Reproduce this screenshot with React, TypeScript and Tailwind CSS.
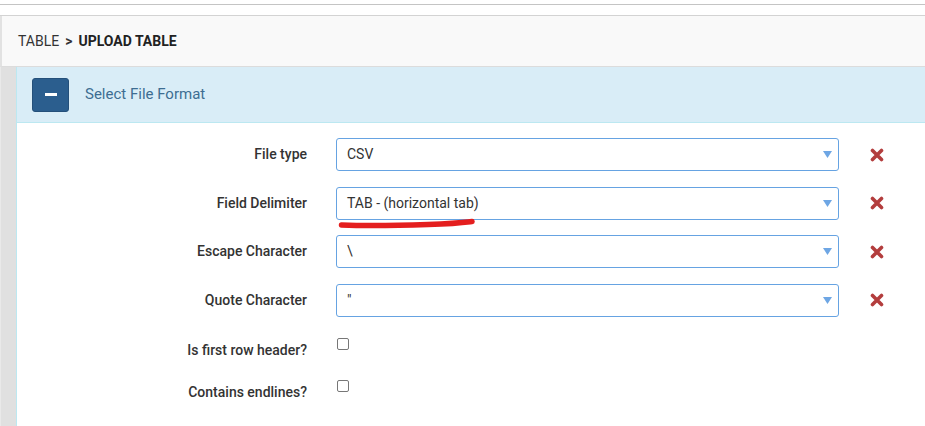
import React from "react";

const rows = [
  { label: "File type", value: "CSV" },
  { label: "Field Delimiter", value: "TAB - (horizontal tab)" },
  { label: "Escape Character", value: "\\" },
  { label: "Quote Character", value: '"' },
];

function Caret() {
  return (
    <svg width="9" height="7" viewBox="0 0 9 7" className="shrink-0">
      <path d="M0 0h9L4.5 7z" fill="#6ea6e4" />
    </svg>
  );
}

function RemoveIcon() {
  return (
    <svg width="14" height="14" viewBox="0 0 14 14">
      <path d="M2.5 2.5L11.5 11.5M11.5 2.5L2.5 11.5" stroke="#b33d3d" strokeWidth="3.6" strokeLinecap="round" />
    </svg>
  );
}

export default function App() {
  return (
    <div className="w-[925px] h-[426px] overflow-hidden bg-white font-['Roboto','Liberation_Sans',sans-serif] text-[#333]">
      {/* top chrome */}
      <div className="h-[5px] border-b border-[#c4c4c4]" />
      <div className="h-[11px] border-b border-[#d3d3d3]" />

      {/* breadcrumb */}
      <div className="h-[51px] bg-[#f9f9f9] border-l-2 border-[#e2e2e2] border-b border-b-[#dcdcdc] flex items-center pl-[16px] text-[14px] text-[#333]">
        <span>TABLE</span>
        <span className="mx-[6px] font-bold">&gt;</span>
        <span className="font-bold text-[#222]">UPLOAD TABLE</span>
      </div>

      <div className="flex h-[359px]">
        <div className="w-[16px] bg-[#e0e0e0] border-l border-[#e9e9e9]" />
        <div className="flex-1 border-l border-[#bce8f1] relative">
          {/* panel header */}
          <div className="h-[56px] bg-[#d9edf7] border-b border-[#bce8f1] flex items-center pl-[15px]">
            <button className="w-[37px] h-[34px] rounded-[3px] bg-[#2b5e8e] border border-[#24507a] flex items-center justify-center">
              <span className="block w-[12px] h-[3px] bg-white" />
            </button>
            <span className="ml-[16px] text-[15px] text-[#3d6d92]">Select File Format</span>
          </div>

          {/* form */}
          <div className="pt-[15px] flex flex-col gap-[15.5px]">
            {rows.map((r) => (
              <div key={r.label} className="flex items-center h-[33px]">
                <div className="w-[290px] text-right text-[14px] font-medium text-[#333]">{r.label}</div>
                <div className="ml-[29px] w-[503px] h-[33px] border border-[#66a3e2] rounded-[3px] flex items-center justify-between pl-[10px] pr-[6px] text-[14px] text-[#333]">
                  <span>{r.value}</span>
                  <Caret />
                </div>
                <div className="ml-[31px] flex items-center">
                  <RemoveIcon />
                </div>
              </div>
            ))}
          </div>

          <div className="mt-[21px] flex flex-col gap-[30px]">
            {["Is first row header?", "Contains endlines?"].map((l) => (
              <div key={l} className="flex items-start h-[12px]">
                <div className="w-[290px] text-right text-[14px] font-medium text-[#333] mt-[4px] leading-[16px]">{l}</div>
                <span className="ml-[30px] block w-[12px] h-[12px] border border-[#777] rounded-[2px] bg-white" />
              </div>
            ))}
          </div>

          {/* hand-drawn annotation */}
          <svg className="absolute left-[321px] top-[151px]" width="138" height="11" viewBox="0 0 138 11">
            <path d="M3.5 7C30 8 60 7.5 90 6.5S126 4.5 134 3.5" stroke="#e41e1e" strokeWidth="5.5" strokeLinecap="round" fill="none" />
          </svg>
        </div>
      </div>
    </div>
  );
}
